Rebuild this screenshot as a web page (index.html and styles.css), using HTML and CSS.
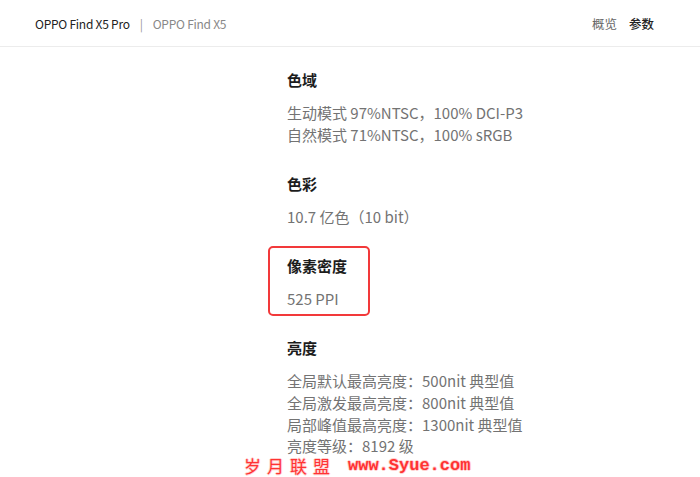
FILE: index.html
```html
<!DOCTYPE html>
<html lang="zh-CN">
<head>
  <meta charset="UTF-8">
  <title>OPPO Find X5 Pro 参数</title>
  <link rel="stylesheet" href="styles.css">
</head>
<body>
  <header class="topbar">
    <div class="models">
      <span class="model current">OPPO Find X5 Pro</span>
      <span class="divider">|</span>
      <span class="model">OPPO Find X5</span>
    </div>
    <nav class="tabs">
      <a href="#">概览</a>
      <a href="#" class="active">参数</a>
    </nav>
  </header>

  <main class="specs">
    <section class="spec">
      <h3>色域</h3>
      <p>生动模式 97%NTSC，100% DCI-P3</p>
      <p>自然模式 71%NTSC，100% sRGB</p>
    </section>
    <section class="spec">
      <h3>色彩</h3>
      <p>10.7 亿色（10 bit）</p>
    </section>
    <section class="spec marked">
      <h3>像素密度</h3>
      <p>525 PPI</p>
    </section>
    <section class="spec">
      <h3>亮度</h3>
      <p>全局默认最高亮度：500nit 典型值</p>
      <p>全局激发最高亮度：800nit 典型值</p>
      <p>局部峰值最高亮度：1300nit 典型值</p>
      <p>亮度等级：8192 级</p>
    </section>
  </main>

  <div class="watermark"><span class="wm-cn">岁月联盟</span><span class="wm-url">www.Syue.com</span></div>
</body>
</html>
```

FILE: styles.css
```css
html, body {
  margin: 0;
  height: 100%;
  overflow: hidden;
}
body {
  position: relative;
  background: #fff;
  font-family: "Noto Sans CJK SC", "Noto Sans", sans-serif;
  color: #222;
}

.topbar {
  display: flex;
  justify-content: space-between;
  align-items: center;
  height: 46px;
  padding: 0 46px 0 35px;
  border-bottom: 1px solid #ececec;
  font-size: 12px;
}
.models {
  display: flex;
  align-items: center;
  gap: 10px;
  letter-spacing: -0.25px;
}
.model {
  color: #888;
}
.model.current {
  color: #222;
}
.divider {
  color: #999;
}
.tabs {
  display: flex;
  gap: 12px;
  font-size: 12.5px;
}
.tabs a {
  color: #666;
  text-decoration: none;
}
.tabs a.active {
  color: #222;
  font-weight: 500;
}

.specs {
  padding: 22px 0 0 287px;
}
.spec {
  position: relative;
  margin-bottom: 27.5px;
}
.spec h3 {
  margin: 0 0 11px;
  font-size: 15px;
  line-height: 22px;
  font-weight: 700;
  color: #1c1c1c;
}
.spec p {
  margin: 0;
  font-size: 15px;
  line-height: 21.7px;
  color: #737373;
}

/* red annotation frame drawn on the screenshot */
.spec.marked::before {
  content: "";
  position: absolute;
  left: -19px;
  top: -9px;
  width: 98px;
  bottom: -6px;
  border: 2px solid #f2393a;
  border-radius: 5px;
}

.watermark {
  position: absolute;
  left: 244px;
  top: 457px;
  display: flex;
  align-items: center;
  gap: 12px;
  line-height: 18px;
  color: #ff3333;
  text-shadow: 1px 0 #ffd0d0, -1px 0 #ffd0d0, 0 1px #ffd0d0, 0 -1px #ffd0d0;
}
.wm-cn {
  font-size: 17px;
  letter-spacing: 6px;
}
.wm-url {
  font-family: "Liberation Mono", monospace;
  font-weight: 700;
  font-size: 17px;
}
```
